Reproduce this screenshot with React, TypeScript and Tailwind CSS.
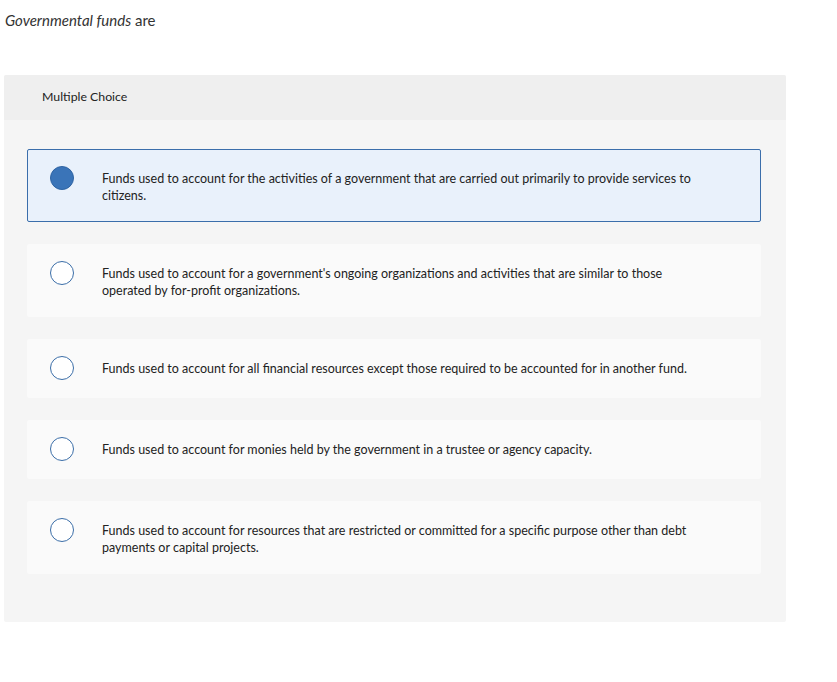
const options = [
  'Funds used to account for the activities of a government that are carried out primarily to provide services to citizens.',
  "Funds used to account for a government's ongoing organizations and activities that are similar to those operated by for-profit organizations.",
  'Funds used to account for all financial resources except those required to be accounted for in another fund.',
  'Funds used to account for monies held by the government in a trustee or agency capacity.',
  'Funds used to account for resources that are restricted or committed for a specific purpose other than debt payments or capital projects.',
];

function Radio({ checked }: { checked: boolean }) {
  return (
    <span
      className={
        checked
          ? 'block h-[24px] w-[24px] shrink-0 rounded-full border border-[#2f64a3] bg-[#3a74b8]'
          : 'block h-[24px] w-[24px] shrink-0 rounded-full border-[1.5px] border-[#3b6ea8] bg-white'
      }
    />
  );
}

export default function App() {
  const selected = 0;
  return (
    <div className="min-h-screen bg-white font-['Lato','Liberation_Sans',sans-serif] text-[#222]">
      <p className="pl-[5px] pt-[12px] text-[15px] leading-[17px] text-[#333]">
        <em>Governmental funds</em> are
      </p>

      <div className="ml-[4px] mt-[46px] w-[782px] overflow-hidden rounded-[2px] bg-[#f5f5f5]">
        <div className="flex h-[45px] items-center bg-[#efefef] pl-[38px] text-[12.3px] text-[#222]">
          Multiple Choice
        </div>

        <div className="flex flex-col gap-[22px] pb-[48px] pl-[23px] pr-[25px] pt-[29px]">
          {options.map((text, i) => (
            <div
              key={i}
              className={
                i === selected
                  ? 'flex items-start rounded-[2px] border border-[#3b6eab] bg-[#e9f1fb] pb-[17px] pl-[22px] pt-[16px]'
                  : 'flex items-start rounded-[2px] border border-transparent bg-[#fafafa] pb-[17px] pl-[22px] pt-[16px]'
              }
            >
              <Radio checked={i === selected} />
              <p className="ml-[28px] w-[610px] pt-[4px] text-[12.5px] leading-[17px] text-[#222]">
                {text}
              </p>
            </div>
          ))}
        </div>
      </div>
    </div>
  );
}
